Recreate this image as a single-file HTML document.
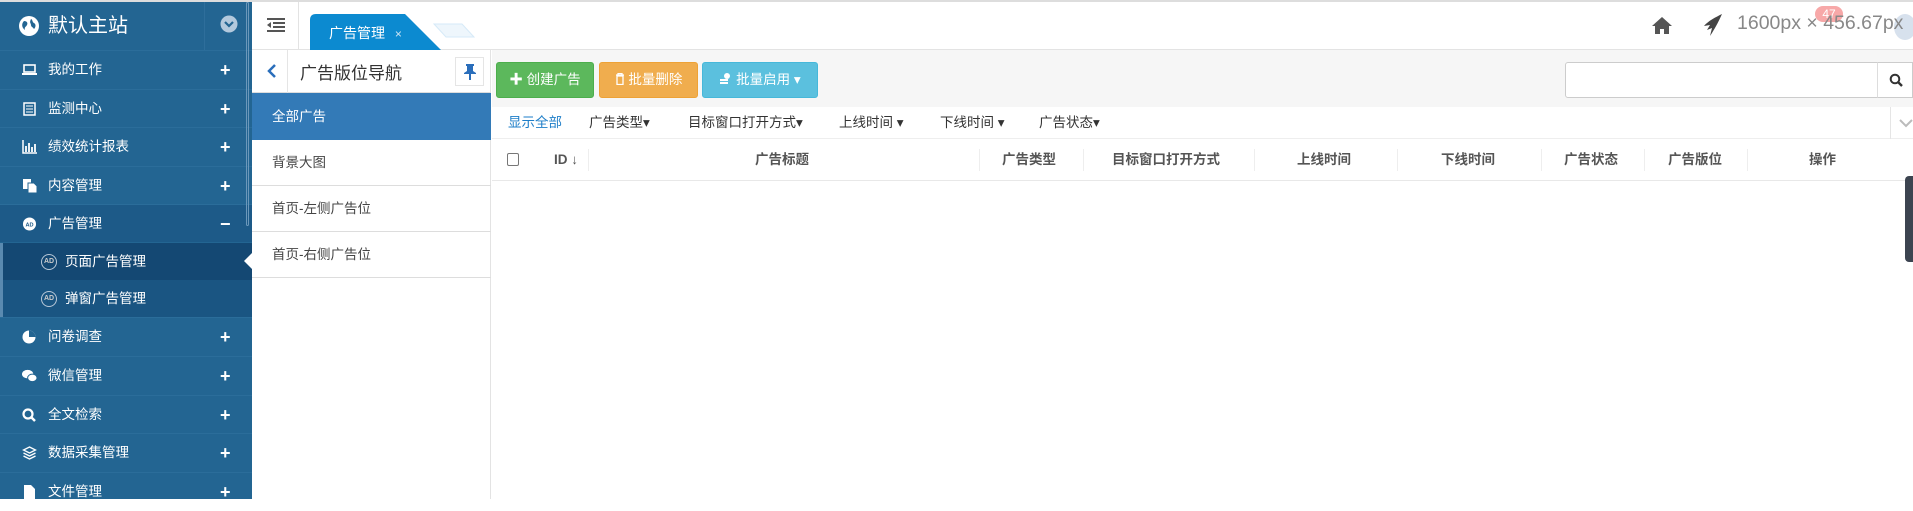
<!DOCTYPE html>
<html><head><meta charset="utf-8"><style>
*{box-sizing:border-box;margin:0;padding:0}
body{width:1913px;height:499px;overflow:hidden;font-family:"Liberation Sans","Noto Sans CJK SC",sans-serif;background:#fff;position:relative;font-size:13px;color:#333}
.abs{position:absolute}
#topline{left:0;top:0;width:1913px;height:2px;background:#ddd}
#side{left:0;top:2px;width:252px;height:497px;background:#236592}
#side .hd{height:48px;position:relative;color:#fff;font-size:20px;line-height:48px;padding-left:48px}
.it{position:absolute;left:0;width:252px;height:38px;border-top:1px solid #2b6d9a;color:#fff;font-size:13.5px;line-height:38px;padding-left:48px}
.it .pl{position:absolute;left:220px;top:0;font-size:18px;font-weight:bold}
.it .ic{position:absolute;left:22px;top:12px;width:15px;height:14px}
.sub{background:#1a5582;padding-left:62px;border-top:none}
.sub .ic{left:38px;top:11px;width:16px;height:16px;border:1.5px solid #b8c8d8;border-radius:50%;font-size:7px;line-height:13px;text-align:center;color:#ccc;font-weight:bold}
#top{left:252px;top:2px;width:1661px;height:48px;background:#fff;border-bottom:1px solid #e3e3e3}
.dv{position:absolute;top:149px;width:1px;height:22px;background:#eee}
</style></head><body>
<div class="abs" id="topline"></div>
<div class="abs" id="side">
 <div class="hd"><svg class="abs" style="left:18px;top:13px" width="22" height="22" viewBox="0 0 22 22"><circle cx="11" cy="11" r="10" fill="#fff"/><path d="M6 6c3 0 4 2 3 4s-3 2-2 5c-3-2-4-6-1-9zM13 4c2 1 1 3 3 4s2 4 0 6c-1-2-3-2-3-4s-2-2 0-6z" fill="#236592"/></svg>默认主站
  <div class="abs" style="left:204px;top:0;width:1px;height:48px;background:#2e6e9b"></div>
  <svg class="abs" style="left:220px;top:13px" width="18" height="18" viewBox="0 0 18 18"><circle cx="9" cy="9" r="8.5" fill="#b3c9dd"/><path d="M5 7l4 4 4-4" stroke="#236592" stroke-width="2.2" fill="none"/></svg>
 </div>
 <div class="it" style="top:48px"><svg class="ic" viewBox="0 0 15 14"><rect x="2" y="2" width="11" height="7" fill="none" stroke="#fff" stroke-width="1.6"/><rect x="0" y="10" width="15" height="2" fill="#fff"/></svg>我的工作<span class="pl">+</span></div>
 <div class="it" style="top:87px"><svg class="ic" viewBox="0 0 15 14"><rect x="2" y="1" width="11" height="12" fill="none" stroke="#fff" stroke-width="1.5"/><path d="M4 4h7M4 7h7M4 10h7" stroke="#fff"/></svg>监测中心<span class="pl">+</span></div>
 <div class="it" style="top:125px"><svg class="ic" viewBox="0 0 15 14"><path d="M1 0v13h14" stroke="#fff" stroke-width="1.5" fill="none"/><path d="M4 6v6M7 3v9M10 7v5M13 4v8" stroke="#fff" stroke-width="1.8"/></svg>绩效统计报表<span class="pl">+</span></div>
 <div class="it" style="top:164px"><svg class="ic" viewBox="0 0 15 14"><rect x="1" y="0" width="8" height="10" fill="#fff"/><path d="M6 4h6l3 3v7H6z" fill="#fff" stroke="#236592"/></svg>内容管理<span class="pl">+</span></div>
 <div class="it" style="top:202px;background:#1d5a88"><svg class="ic" viewBox="0 0 15 15"><circle cx="7.5" cy="7.5" r="7" fill="#fff"/><text x="7.5" y="10" font-size="6" text-anchor="middle" fill="#1d5a88" font-weight="bold" font-family="Liberation Sans">AD</text></svg>广告管理<span class="pl">−</span></div>
 <div class="it sub" style="top:241px;height:37px;background:#144873;border-left:3px solid #5a8ab0"><span class="ic">AD</span>页面广告管理</div>
 <div class="it sub" style="top:278px;height:37px;border-left:3px solid #5a8ab0"><span class="ic">AD</span>弹窗广告管理</div>
 <div class="it" style="top:315px"><svg class="ic" viewBox="0 0 15 14"><circle cx="7" cy="7" r="6.5" fill="#fff"/><path d="M7 7V0.5A6.5 6.5 0 0 1 13.5 7z" fill="#236592"/></svg>问卷调查<span class="pl">+</span></div>
 <div class="it" style="top:354px"><svg class="ic" viewBox="0 0 16 14"><ellipse cx="6" cy="5" rx="6" ry="4.5" fill="#fff"/><ellipse cx="11" cy="9" rx="5" ry="4" fill="#fff" stroke="#236592"/></svg>微信管理<span class="pl">+</span></div>
 <div class="it" style="top:393px"><svg class="ic" viewBox="0 0 15 14"><circle cx="6" cy="6" r="4.5" stroke="#fff" stroke-width="2.2" fill="none"/><path d="M9 9l4 4" stroke="#fff" stroke-width="2.5"/></svg>全文检索<span class="pl">+</span></div>
 <div class="it" style="top:431px"><svg class="ic" viewBox="0 0 15 14"><path d="M7.5 1l6 3-6 3-6-3zM1.5 7l6 3 6-3M1.5 10l6 3 6-3" stroke="#fff" stroke-width="1.3" fill="none"/></svg>数据采集管理<span class="pl">+</span></div>
 <div class="it" style="top:470px"><svg class="ic" viewBox="0 0 15 14"><path d="M2 0h7l4 4v10H2z" fill="#fff"/></svg>文件管理<span class="pl">+</span></div>
 <div class="abs" style="left:246px;top:0;width:3px;height:224px;border:1px solid #6b98bb;border-radius:2px"></div>
</div>
<svg class="abs" style="left:242px;top:253px" width="10" height="16"><path d="M10 0L2 8l8 8z" fill="#fff"/></svg>

<div class="abs" id="top">
 <svg class="abs" style="left:15px;top:16px" width="18" height="14" viewBox="0 0 18 14"><path d="M0 1h18M6 5h12M6 9h12M0 13h18" stroke="#555" stroke-width="2"/><path d="M4 4L0 7l4 3z" fill="#555"/></svg>
 <div class="abs" style="left:46px;top:0;width:1px;height:48px;background:#e3e3e3"></div>
 <svg class="abs" style="left:58px;top:12px" width="170" height="37"><path d="M124 10h28l12 13h-28z" fill="#eef6fc" stroke="#d6eaf8"/><path d="M6 0H95L131 36H0V6Q0 0 6 0z" fill="#0c8ad0"/></svg>
 <div class="abs" style="left:77px;top:21px;color:#fff;font-size:14px;white-space:nowrap">广告管理 <span style="font-size:12px;color:#cfe6f5;margin-left:6px">×</span></div>
 <svg class="abs" style="left:1400px;top:14px" width="20" height="18" viewBox="0 0 20 18"><path d="M10 1L0 10h3v8h5v-5h4v5h5v-8h3z" fill="#555"/></svg>
 <svg class="abs" style="left:1450px;top:11px" width="22" height="24" viewBox="0 0 22 24"><path d="M20 1C14 4 6 8 2 13l6-1-3 5 5-2-2 8c4-6 8-13 12-22z" fill="#444"/></svg>
 <div class="abs" style="left:1642px;top:12px;width:22px;height:26px;border-radius:50%;background:#d7e1ed"></div>
 <div class="abs" style="left:1563px;top:4px;width:28px;height:16px;border-radius:8px;background:#f7a8a8;color:#fff;font-size:12px;text-align:center;line-height:16px">47</div>
 <div class="abs" style="left:1485px;top:10px;font-size:19.5px;color:#888;white-space:nowrap">1600px × 456.67px</div>
</div>

<!-- left nav panel -->
<div class="abs" style="left:252px;top:50px;width:239px;height:449px;border-right:1px solid #e3e3e3;background:#fff">
 <div class="abs" style="left:0;top:0;width:239px;height:43px;border-bottom:1px solid #ddd"></div>
 <svg class="abs" style="left:15px;top:14px" width="10" height="14"><path d="M8 1L2 7l6 6" stroke="#2a6ebb" stroke-width="2.5" fill="none"/></svg>
 <div class="abs" style="left:35px;top:0;width:1px;height:43px;background:#e5e5e5"></div>
 <div class="abs" style="left:48px;top:9px;font-size:17px;color:#333">广告版位导航</div>
 <div class="abs" style="left:203px;top:7px;width:29px;height:29px;border:1px solid #e5e5e5"><svg style="margin:6px 8px" width="12" height="16" viewBox="0 0 12 16"><path d="M2 0h8v2H9v5l3 2v1H7v6H5v-6H0V9l3-2V2H2z" fill="#2a6ebb"/></svg></div>
 <div class="abs" style="left:0;top:43px;width:239px;height:47px;background:#337ab7;color:#fff;font-size:13.5px;line-height:47px;padding-left:20px">全部广告</div>
 <div class="abs" style="left:0;top:90px;width:239px;height:46px;border-bottom:1px solid #ddd;font-size:13.5px;line-height:46px;padding-left:20px;color:#444">背景大图</div>
 <div class="abs" style="left:0;top:136px;width:239px;height:46px;border-bottom:1px solid #ddd;font-size:13.5px;line-height:46px;padding-left:20px;color:#444">首页-左侧广告位</div>
 <div class="abs" style="left:0;top:182px;width:239px;height:46px;border-bottom:1px solid #ddd;font-size:13.5px;line-height:46px;padding-left:20px;color:#444">首页-右侧广告位</div>
</div>

<!-- toolbar -->
<div class="abs" style="left:492px;top:50px;width:1421px;height:57px;background:#f6f6f6"></div>
<div class="abs" style="left:496px;top:62px;width:98px;height:36px;background:#5cb85c;border:1px solid #4cae4c;border-radius:3px;color:#fff;font-size:13.5px;line-height:34px;text-align:center;white-space:nowrap"><b>✚</b> 创建广告</div>
<div class="abs" style="left:599px;top:62px;width:99px;height:36px;background:#f0ad4e;border:1px solid #eea236;border-radius:3px;color:#fff;font-size:13.5px;line-height:34px;text-align:center;white-space:nowrap"><svg width="10" height="12" viewBox="0 0 10 12" style="vertical-align:-1px"><path d="M1 2h8M3 2V0.5h4V2M2 3h6v8.5H2z" stroke="#fff" stroke-width="1.3" fill="none"/></svg> 批量删除</div>
<div class="abs" style="left:702px;top:62px;width:116px;height:36px;background:#5bc0de;border:1px solid #46b8da;border-radius:3px;color:#fff;font-size:13.5px;line-height:34px;text-align:center;white-space:nowrap"><svg width="13" height="13" viewBox="0 0 13 13" style="vertical-align:-1px"><circle cx="8" cy="4" r="3" fill="#fff"/><rect x="1" y="7" width="8" height="2" fill="#fff"/><rect x="1" y="10" width="8" height="2" fill="#fff"/></svg> 批量启用 ▾</div>
<div class="abs" style="left:1565px;top:62px;width:313px;height:36px;background:#fff;border:1px solid #ccc;border-radius:3px 0 0 3px"></div>
<div class="abs" style="left:1877px;top:62px;width:36px;height:36px;background:#fff;border:1px solid #ccc;border-left:1px solid #ddd"><svg style="margin:10px 11px" width="14" height="14" viewBox="0 0 14 14"><circle cx="6" cy="6" r="4.3" stroke="#333" stroke-width="2" fill="none"/><path d="M9 9l4 4" stroke="#333" stroke-width="2.4"/></svg></div>

<!-- filter row -->
<div class="abs" style="left:492px;top:107px;width:1421px;height:32px;border-bottom:1px solid #eee;font-size:13.5px;line-height:32px;color:#333;white-space:nowrap">
 <span class="abs" style="left:16px;color:#1e7ec8">显示全部</span>
 <span class="abs" style="left:97px">广告类型▾</span>
 <span class="abs" style="left:196px">目标窗口打开方式▾</span>
 <span class="abs" style="left:347px">上线时间 ▾</span>
 <span class="abs" style="left:448px">下线时间 ▾</span>
 <span class="abs" style="left:547px">广告状态▾</span>
 <div class="abs" style="left:1398px;top:0;width:1px;height:32px;background:#e5e5e5"></div>
 <svg class="abs" style="left:1407px;top:11px" width="14" height="10"><path d="M1 2l6 6 6-6" stroke="#bbb" stroke-width="2" fill="none"/></svg>
</div>

<!-- table header -->
<div class="abs" style="left:492px;top:139px;width:1421px;height:42px;border-bottom:1px solid #e8e8e8;font-size:13.5px;font-weight:bold;color:#555;line-height:42px;white-space:nowrap">
 <div class="abs" style="left:15px;top:14px;width:12px;height:13px;border:1px solid #777;border-radius:2px"></div>
 <span class="abs" style="left:62px">ID ↓</span>
</div>
<div class="dv" style="left:588px"></div>
<div class="dv" style="left:979px"></div>
<div class="dv" style="left:1083px"></div>
<div class="dv" style="left:1254px"></div>
<div class="dv" style="left:1397px"></div>
<div class="dv" style="left:1541px"></div>
<div class="dv" style="left:1644px"></div>
<div class="dv" style="left:1747px"></div>
<div class="abs" style="top:139px;left:0;width:1913px;height:42px;font-size:13.5px;font-weight:bold;color:#555;line-height:42px;white-space:nowrap">
 <span class="abs" style="left:755px">广告标题</span>
 <span class="abs" style="left:1002px">广告类型</span>
 <span class="abs" style="left:1112px">目标窗口打开方式</span>
 <span class="abs" style="left:1297px">上线时间</span>
 <span class="abs" style="left:1441px">下线时间</span>
 <span class="abs" style="left:1564px">广告状态</span>
 <span class="abs" style="left:1668px">广告版位</span>
 <span class="abs" style="left:1809px">操作</span>
</div>
<div class="abs" style="left:1905px;top:176px;width:8px;height:86px;background:#3c4450;border-radius:4px 0 0 4px"></div>
</body></html>
